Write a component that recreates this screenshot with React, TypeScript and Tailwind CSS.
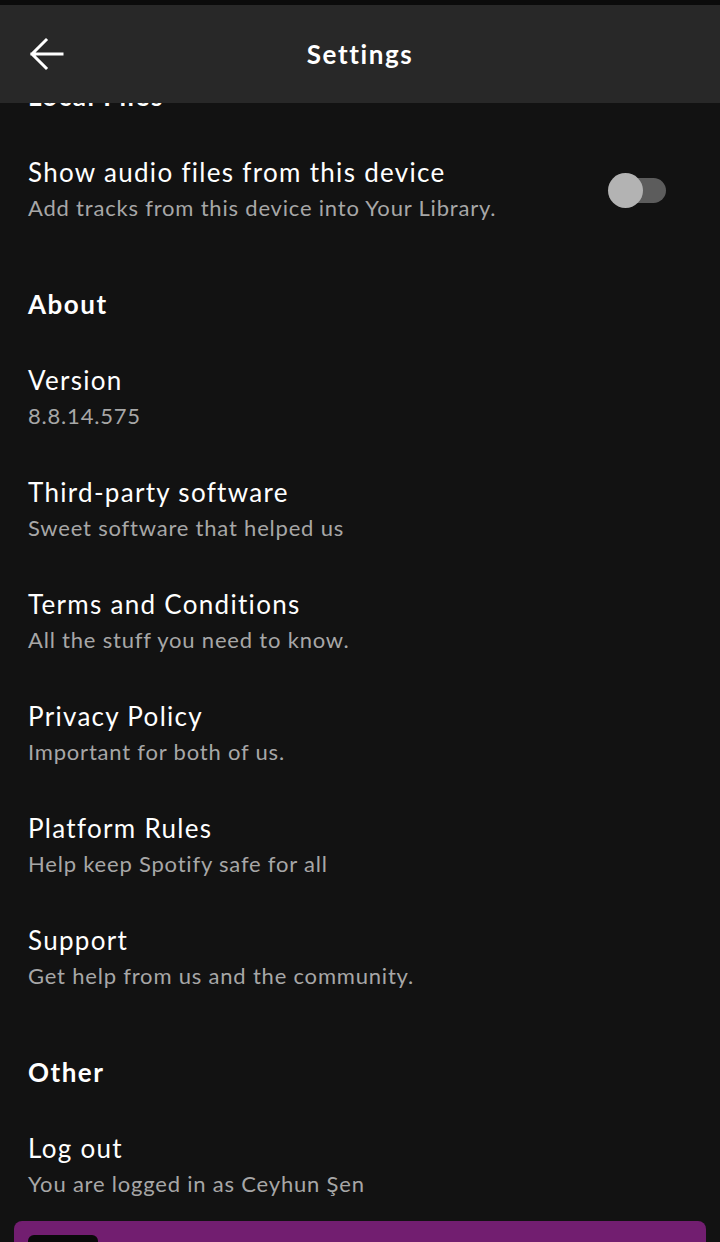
import React from "react";

const font = { fontFamily: "Lato, 'Noto Sans', sans-serif" };

function Item({ title, sub }: { title: string; sub: string }) {
  return (
    <div className="flex flex-col">
      <div className="text-[26px] leading-[36px] tracking-[1.3px] text-white">{title}</div>
      <div className="text-[22px] leading-[36px] tracking-[0.8px] text-[#a7a7a7]">{sub}</div>
    </div>
  );
}

function Heading({ children }: { children: React.ReactNode }) {
  return <div className="text-[26px] leading-[36px] font-bold tracking-[1.5px] text-white">{children}</div>;
}

export default function App() {
  return (
    <div className="w-[720px] h-[1242px] bg-[#121212] flex flex-col overflow-hidden" style={font}>
      <div className="h-[5px] bg-[#0b0b0b] shrink-0" />
      <div className="h-[98px] bg-[#282828] shrink-0 relative z-10 flex items-center justify-center">
        <svg className="absolute left-[28px] top-[31px]" width="38" height="38" viewBox="0 0 38 38" fill="none">
          <path d="M34 18H4M18 4L4 18l14 14" stroke="white" strokeWidth="3" strokeLinecap="square" />
        </svg>
        <div className="text-[26px] font-bold tracking-[1.6px] text-white">Settings</div>
      </div>
      <div className="flex-1 overflow-hidden relative">
        <div className="-mt-[25px] px-[28px] flex flex-col">
          <Heading>Local Files</Heading>
          <div className="mt-[40px] flex items-center justify-between">
            <Item title="Show audio files from this device" sub="Add tracks from this device into Your Library." />
            <div className="relative w-[58px] h-[36px] mr-[26px] flex items-center">
              <div className="absolute left-[4px] right-0 h-[25px] rounded-full bg-[#5c5c5c]" />
              <div className="absolute left-0 w-[35px] h-[35px] rounded-full bg-[#b3b3b3]" />
            </div>
          </div>
          <div className="mt-[60px]"><Heading>About</Heading></div>
          <div className="mt-[40px] flex flex-col gap-[40px]">
            <Item title="Version" sub="8.8.14.575" />
            <Item title="Third-party software" sub="Sweet software that helped us" />
            <Item title="Terms and Conditions" sub="All the stuff you need to know." />
            <Item title="Privacy Policy" sub="Important for both of us." />
            <Item title="Platform Rules" sub="Help keep Spotify safe for all" />
            <Item title="Support" sub="Get help from us and the community." />
          </div>
          <div className="mt-[60px]"><Heading>Other</Heading></div>
          <div className="mt-[40px]">
            <Item title="Log out" sub="You are logged in as Ceyhun Şen" />
          </div>
        </div>
        <div className="mx-[14px] mt-[19px] h-[60px] rounded-[8px] bg-[#721e70] px-[14px] pt-[14px]">
          <div className="w-[70px] h-[60px] rounded-[6px] bg-[#0a0a0a]" />
        </div>
      </div>
    </div>
  );
}
